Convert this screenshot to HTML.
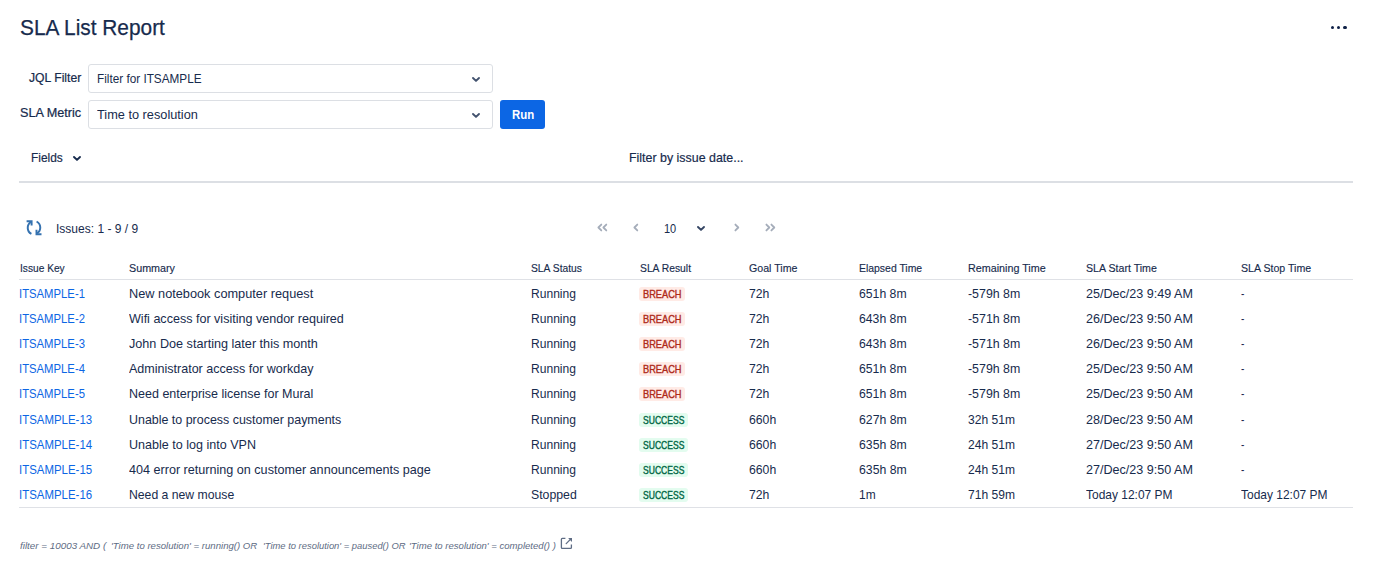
<!DOCTYPE html>
<html><head><meta charset="utf-8"><title>SLA List Report</title>
<style>
html,body{margin:0;padding:0;background:#fff;width:1374px;height:574px;overflow:hidden;position:relative}
body{font-family:"Liberation Sans",sans-serif;}
.t{position:absolute;white-space:pre;}
.ic{position:absolute;display:block}
.dot{position:absolute;width:3.6px;height:3.6px;border-radius:50%;background:#0F2147}
.sel{position:absolute;left:88px;width:403px;height:27px;border:1px solid #DCDFE4;border-radius:3px;background:#fff}
.run{position:absolute;left:500px;top:100px;width:45px;height:29px;background:#0C66E4;border-radius:3px}
.ln{position:absolute;left:19px;width:1334px}
.loz{position:absolute;height:14px;border-radius:3px}
</style></head><body>
<div class="t" style="left:20.00px;top:13px;font-size:22.4px;line-height:30px;color:#172B4D;transform:scaleX(0.9314);transform-origin:0.00px 0;-webkit-text-stroke:0.25px #172B4D;">SLA List Report</div>
<div class="dot" style="left:1330.60px;top:25.8px"></div>
<div class="dot" style="left:1336.90px;top:25.8px"></div>
<div class="dot" style="left:1343.20px;top:25.8px"></div>
<div class="t" style="left:28.60px;top:70px;font-size:12.0px;line-height:16px;color:#172B4D;transform:scaleX(1.0128);transform-origin:0.00px 0;-webkit-text-stroke:0.22px #172B4D;">JQL Filter</div>
<div class="t" style="left:19.70px;top:105px;font-size:12.0px;line-height:16px;color:#172B4D;transform:scaleX(1.0531);transform-origin:0.00px 0;-webkit-text-stroke:0.22px #172B4D;">SLA Metric</div>
<div class="sel" style="top:64px"></div>
<div class="sel" style="top:100px"></div>
<div class="t" style="left:97.00px;top:70px;font-size:13.1px;line-height:18px;color:#172B4D;transform:scaleX(0.8982);transform-origin:0.00px 0;">Filter for ITSAMPLE</div>
<div class="t" style="left:96.80px;top:106px;font-size:13.1px;line-height:18px;color:#172B4D;transform:scaleX(0.9737);transform-origin:0.00px 0;">Time to resolution</div>
<svg class="ic" style="left:471px;top:76px" width="10" height="7" viewBox="0 0 10 7"><path d="M2 2 L5 4.9 L8 2" fill="none" stroke="#42526E" stroke-width="1.9" stroke-linecap="round" stroke-linejoin="round"/></svg>
<svg class="ic" style="left:471px;top:112px" width="10" height="7" viewBox="0 0 10 7"><path d="M2 2 L5 4.9 L8 2" fill="none" stroke="#42526E" stroke-width="1.9" stroke-linecap="round" stroke-linejoin="round"/></svg>
<div class="run"></div>
<div class="t" style="left:512.00px;top:106px;font-size:13.1px;line-height:18px;color:#FFFFFF;font-weight:700;transform:scaleX(0.8713);transform-origin:0.00px 0;">Run</div>
<div class="t" style="left:30.60px;top:149px;font-size:13.4px;line-height:18px;color:#172B4D;transform:scaleX(0.8888);transform-origin:0.00px 0;-webkit-text-stroke:0.2px #172B4D;">Fields</div>
<svg class="ic" style="left:72.2px;top:155px" width="10" height="7" viewBox="0 0 10 7"><path d="M2 2 L5 4.9 L8 2" fill="none" stroke="#172B4D" stroke-width="1.9" stroke-linecap="round" stroke-linejoin="round"/></svg>
<div class="t" style="left:628.70px;top:149px;font-size:13.4px;line-height:18px;color:#172B4D;transform:scaleX(0.9271);transform-origin:0.00px 0;-webkit-text-stroke:0.2px #172B4D;">Filter by issue date...</div>
<div class="ln" style="top:181px;height:2px;background:#DCDFE4"></div>
<svg class="ic" style="left:22px;top:216px" width="24" height="22" viewBox="0 0 24 22">
<g fill="none" stroke="#3572B0" stroke-width="1.95" stroke-linecap="butt" stroke-linejoin="miter">
<path d="M9.4 17.9 A6.9 6.9 0 0 1 8.9 6"/>
<path d="M4.6 5.2 H9.6 V9.6"/>
<path d="M14.6 5.5 A6.9 6.9 0 0 1 15.1 17.4"/>
<path d="M19.5 18.2 H14.5 V13.8"/>
</g></svg>
<div class="t" style="left:55.80px;top:221px;font-size:12.6px;line-height:17px;color:#172B4D;transform:scaleX(0.9545);transform-origin:0.00px 0;">Issues: 1 - 9 / 9</div>
<svg class="ic" style="left:596.8px;top:223.4px" width="7" height="9" viewBox="0 0 7 9"><path d="M4.3 1.55 L1.4 4.5 L4.3 7.45" fill="none" stroke="#A5ADBA" stroke-width="1.8" stroke-linecap="round" stroke-linejoin="round"/></svg>
<svg class="ic" style="left:601.6px;top:223.4px" width="7" height="9" viewBox="0 0 7 9"><path d="M4.3 1.55 L1.4 4.5 L4.3 7.45" fill="none" stroke="#A5ADBA" stroke-width="1.8" stroke-linecap="round" stroke-linejoin="round"/></svg>
<svg class="ic" style="left:632.5px;top:223.4px" width="7" height="9" viewBox="0 0 7 9"><path d="M4.3 1.55 L1.4 4.5 L4.3 7.45" fill="none" stroke="#A5ADBA" stroke-width="1.8" stroke-linecap="round" stroke-linejoin="round"/></svg>
<div class="t" style="left:664.00px;top:220px;font-size:13.1px;line-height:18px;color:#172B4D;transform:scaleX(0.8390);transform-origin:0.00px 0;">10</div>
<svg class="ic" style="left:696px;top:225px" width="10" height="7" viewBox="0 0 10 7"><path d="M2 2 L5 4.9 L8 2" fill="none" stroke="#344563" stroke-width="1.9" stroke-linecap="round" stroke-linejoin="round"/></svg>
<svg class="ic" style="left:734.4px;top:223.4px" width="7" height="9" viewBox="0 0 7 9"><path d="M1.4 1.55 L4.3 4.5 L1.4 7.45" fill="none" stroke="#A5ADBA" stroke-width="1.8" stroke-linecap="round" stroke-linejoin="round"/></svg>
<svg class="ic" style="left:764.5px;top:223.4px" width="7" height="9" viewBox="0 0 7 9"><path d="M1.4 1.55 L4.3 4.5 L1.4 7.45" fill="none" stroke="#A5ADBA" stroke-width="1.8" stroke-linecap="round" stroke-linejoin="round"/></svg>
<svg class="ic" style="left:769.5px;top:223.4px" width="7" height="9" viewBox="0 0 7 9"><path d="M1.4 1.55 L4.3 4.5 L1.4 7.45" fill="none" stroke="#A5ADBA" stroke-width="1.8" stroke-linecap="round" stroke-linejoin="round"/></svg>
<div class="t" style="left:19.50px;top:260px;font-size:11.8px;line-height:16px;color:#172B4D;transform:scaleX(0.8629);transform-origin:0.00px 0;-webkit-text-stroke:0.15px #172B4D;">Issue Key</div>
<div class="t" style="left:129.20px;top:260px;font-size:11.8px;line-height:16px;color:#172B4D;transform:scaleX(0.9108);transform-origin:0.00px 0;-webkit-text-stroke:0.15px #172B4D;">Summary</div>
<div class="t" style="left:530.50px;top:260px;font-size:11.8px;line-height:16px;color:#172B4D;transform:scaleX(0.8731);transform-origin:0.00px 0;-webkit-text-stroke:0.15px #172B4D;">SLA Status</div>
<div class="t" style="left:639.50px;top:260px;font-size:11.8px;line-height:16px;color:#172B4D;transform:scaleX(0.8740);transform-origin:0.00px 0;-webkit-text-stroke:0.15px #172B4D;">SLA Result</div>
<div class="t" style="left:748.60px;top:260px;font-size:11.8px;line-height:16px;color:#172B4D;transform:scaleX(0.9005);transform-origin:0.00px 0;-webkit-text-stroke:0.15px #172B4D;">Goal Time</div>
<div class="t" style="left:858.70px;top:260px;font-size:11.8px;line-height:16px;color:#172B4D;transform:scaleX(0.8838);transform-origin:0.00px 0;-webkit-text-stroke:0.15px #172B4D;">Elapsed Time</div>
<div class="t" style="left:967.90px;top:260px;font-size:11.8px;line-height:16px;color:#172B4D;transform:scaleX(0.9114);transform-origin:0.00px 0;-webkit-text-stroke:0.15px #172B4D;">Remaining Time</div>
<div class="t" style="left:1086.40px;top:260px;font-size:11.8px;line-height:16px;color:#172B4D;transform:scaleX(0.9008);transform-origin:0.00px 0;-webkit-text-stroke:0.15px #172B4D;">SLA Start Time</div>
<div class="t" style="left:1240.50px;top:260px;font-size:11.8px;line-height:16px;color:#172B4D;transform:scaleX(0.8993);transform-origin:0.00px 0;-webkit-text-stroke:0.15px #172B4D;">SLA Stop Time</div>
<div class="ln" style="top:279px;height:1px;background:#DFE1E6"></div>
<div class="ln" style="top:507px;height:1px;background:#DFE1E6"></div>
<div class="t" style="left:19.40px;top:285px;font-size:13.4px;line-height:18px;color:#0C66E4;transform:scaleX(0.8441);transform-origin:0.00px 0;">ITSAMPLE-1</div>
<div class="t" style="left:129.10px;top:285px;font-size:13.4px;line-height:18px;color:#172B4D;transform:scaleX(0.9520);transform-origin:0.00px 0;">New notebook computer request</div>
<div class="t" style="left:530.80px;top:285px;font-size:13.4px;line-height:18px;color:#172B4D;transform:scaleX(0.9015);transform-origin:0.00px 0;">Running</div>
<div class="loz" style="left:639px;top:287px;width:46px;background:#FFEBE6"></div>
<div class="t" style="left:643.00px;top:288px;font-size:10.1px;line-height:14px;color:#AE2A19;transform:scaleX(0.9165);transform-origin:0.00px 0;-webkit-text-stroke:0.36px #AE2A19;">BREACH</div>
<div class="t" style="left:748.60px;top:285px;font-size:13.4px;line-height:18px;color:#172B4D;transform:scaleX(0.9116);transform-origin:0.00px 0;">72h</div>
<div class="t" style="left:858.50px;top:285px;font-size:13.4px;line-height:18px;color:#172B4D;transform:scaleX(0.9132);transform-origin:0.00px 0;">651h 8m</div>
<div class="t" style="left:968.00px;top:285px;font-size:13.4px;line-height:18px;color:#172B4D;transform:scaleX(0.9238);transform-origin:0.00px 0;">-579h 8m</div>
<div class="t" style="left:1086.00px;top:285px;font-size:13.4px;line-height:18px;color:#172B4D;transform:scaleX(0.9389);transform-origin:0.00px 0;">25/Dec/23 9:49 AM</div>
<div class="t" style="left:1241.30px;top:285px;font-size:13.4px;line-height:18px;color:#172B4D;transform:scaleX(0.7574);transform-origin:0.00px 0;">-</div>
<div class="t" style="left:19.40px;top:310px;font-size:13.4px;line-height:18px;color:#0C66E4;transform:scaleX(0.8441);transform-origin:0.00px 0;">ITSAMPLE-2</div>
<div class="t" style="left:129.10px;top:310px;font-size:13.4px;line-height:18px;color:#172B4D;transform:scaleX(0.9372);transform-origin:0.00px 0;">Wifi access for visiting vendor required</div>
<div class="t" style="left:530.80px;top:310px;font-size:13.4px;line-height:18px;color:#172B4D;transform:scaleX(0.9015);transform-origin:0.00px 0;">Running</div>
<div class="loz" style="left:639px;top:312px;width:46px;background:#FFEBE6"></div>
<div class="t" style="left:643.00px;top:313px;font-size:10.1px;line-height:14px;color:#AE2A19;transform:scaleX(0.9165);transform-origin:0.00px 0;-webkit-text-stroke:0.36px #AE2A19;">BREACH</div>
<div class="t" style="left:748.60px;top:310px;font-size:13.4px;line-height:18px;color:#172B4D;transform:scaleX(0.9116);transform-origin:0.00px 0;">72h</div>
<div class="t" style="left:858.50px;top:310px;font-size:13.4px;line-height:18px;color:#172B4D;transform:scaleX(0.9132);transform-origin:0.00px 0;">643h 8m</div>
<div class="t" style="left:968.00px;top:310px;font-size:13.4px;line-height:18px;color:#172B4D;transform:scaleX(0.9238);transform-origin:0.00px 0;">-571h 8m</div>
<div class="t" style="left:1086.00px;top:310px;font-size:13.4px;line-height:18px;color:#172B4D;transform:scaleX(0.9389);transform-origin:0.00px 0;">26/Dec/23 9:50 AM</div>
<div class="t" style="left:1241.30px;top:310px;font-size:13.4px;line-height:18px;color:#172B4D;transform:scaleX(0.7574);transform-origin:0.00px 0;">-</div>
<div class="t" style="left:19.40px;top:335px;font-size:13.4px;line-height:18px;color:#0C66E4;transform:scaleX(0.8441);transform-origin:0.00px 0;">ITSAMPLE-3</div>
<div class="t" style="left:129.10px;top:335px;font-size:13.4px;line-height:18px;color:#172B4D;transform:scaleX(0.9434);transform-origin:0.00px 0;">John Doe starting later this month</div>
<div class="t" style="left:530.80px;top:335px;font-size:13.4px;line-height:18px;color:#172B4D;transform:scaleX(0.9015);transform-origin:0.00px 0;">Running</div>
<div class="loz" style="left:639px;top:337px;width:46px;background:#FFEBE6"></div>
<div class="t" style="left:643.00px;top:338px;font-size:10.1px;line-height:14px;color:#AE2A19;transform:scaleX(0.9165);transform-origin:0.00px 0;-webkit-text-stroke:0.36px #AE2A19;">BREACH</div>
<div class="t" style="left:748.60px;top:335px;font-size:13.4px;line-height:18px;color:#172B4D;transform:scaleX(0.9116);transform-origin:0.00px 0;">72h</div>
<div class="t" style="left:858.50px;top:335px;font-size:13.4px;line-height:18px;color:#172B4D;transform:scaleX(0.9132);transform-origin:0.00px 0;">643h 8m</div>
<div class="t" style="left:968.00px;top:335px;font-size:13.4px;line-height:18px;color:#172B4D;transform:scaleX(0.9238);transform-origin:0.00px 0;">-571h 8m</div>
<div class="t" style="left:1086.00px;top:335px;font-size:13.4px;line-height:18px;color:#172B4D;transform:scaleX(0.9389);transform-origin:0.00px 0;">26/Dec/23 9:50 AM</div>
<div class="t" style="left:1241.30px;top:335px;font-size:13.4px;line-height:18px;color:#172B4D;transform:scaleX(0.7574);transform-origin:0.00px 0;">-</div>
<div class="t" style="left:19.40px;top:360px;font-size:13.4px;line-height:18px;color:#0C66E4;transform:scaleX(0.8441);transform-origin:0.00px 0;">ITSAMPLE-4</div>
<div class="t" style="left:129.10px;top:360px;font-size:13.4px;line-height:18px;color:#172B4D;transform:scaleX(0.9351);transform-origin:0.00px 0;">Administrator access for workday</div>
<div class="t" style="left:530.80px;top:360px;font-size:13.4px;line-height:18px;color:#172B4D;transform:scaleX(0.9015);transform-origin:0.00px 0;">Running</div>
<div class="loz" style="left:639px;top:362px;width:46px;background:#FFEBE6"></div>
<div class="t" style="left:643.00px;top:363px;font-size:10.1px;line-height:14px;color:#AE2A19;transform:scaleX(0.9165);transform-origin:0.00px 0;-webkit-text-stroke:0.36px #AE2A19;">BREACH</div>
<div class="t" style="left:748.60px;top:360px;font-size:13.4px;line-height:18px;color:#172B4D;transform:scaleX(0.9116);transform-origin:0.00px 0;">72h</div>
<div class="t" style="left:858.50px;top:360px;font-size:13.4px;line-height:18px;color:#172B4D;transform:scaleX(0.9132);transform-origin:0.00px 0;">651h 8m</div>
<div class="t" style="left:968.00px;top:360px;font-size:13.4px;line-height:18px;color:#172B4D;transform:scaleX(0.9238);transform-origin:0.00px 0;">-579h 8m</div>
<div class="t" style="left:1086.00px;top:360px;font-size:13.4px;line-height:18px;color:#172B4D;transform:scaleX(0.9389);transform-origin:0.00px 0;">25/Dec/23 9:50 AM</div>
<div class="t" style="left:1241.30px;top:360px;font-size:13.4px;line-height:18px;color:#172B4D;transform:scaleX(0.7574);transform-origin:0.00px 0;">-</div>
<div class="t" style="left:19.40px;top:385px;font-size:13.4px;line-height:18px;color:#0C66E4;transform:scaleX(0.8441);transform-origin:0.00px 0;">ITSAMPLE-5</div>
<div class="t" style="left:129.10px;top:385px;font-size:13.4px;line-height:18px;color:#172B4D;transform:scaleX(0.9347);transform-origin:0.00px 0;">Need enterprise license for Mural</div>
<div class="t" style="left:530.80px;top:385px;font-size:13.4px;line-height:18px;color:#172B4D;transform:scaleX(0.9015);transform-origin:0.00px 0;">Running</div>
<div class="loz" style="left:639px;top:387px;width:46px;background:#FFEBE6"></div>
<div class="t" style="left:643.00px;top:388px;font-size:10.1px;line-height:14px;color:#AE2A19;transform:scaleX(0.9165);transform-origin:0.00px 0;-webkit-text-stroke:0.36px #AE2A19;">BREACH</div>
<div class="t" style="left:748.60px;top:385px;font-size:13.4px;line-height:18px;color:#172B4D;transform:scaleX(0.9116);transform-origin:0.00px 0;">72h</div>
<div class="t" style="left:858.50px;top:385px;font-size:13.4px;line-height:18px;color:#172B4D;transform:scaleX(0.9132);transform-origin:0.00px 0;">651h 8m</div>
<div class="t" style="left:968.00px;top:385px;font-size:13.4px;line-height:18px;color:#172B4D;transform:scaleX(0.9238);transform-origin:0.00px 0;">-579h 8m</div>
<div class="t" style="left:1086.00px;top:385px;font-size:13.4px;line-height:18px;color:#172B4D;transform:scaleX(0.9389);transform-origin:0.00px 0;">25/Dec/23 9:50 AM</div>
<div class="t" style="left:1241.30px;top:385px;font-size:13.4px;line-height:18px;color:#172B4D;transform:scaleX(0.7574);transform-origin:0.00px 0;">-</div>
<div class="t" style="left:19.40px;top:411px;font-size:13.4px;line-height:18px;color:#0C66E4;transform:scaleX(0.8549);transform-origin:0.00px 0;">ITSAMPLE-13</div>
<div class="t" style="left:129.10px;top:411px;font-size:13.4px;line-height:18px;color:#172B4D;transform:scaleX(0.9288);transform-origin:0.00px 0;">Unable to process customer payments</div>
<div class="t" style="left:530.80px;top:411px;font-size:13.4px;line-height:18px;color:#172B4D;transform:scaleX(0.9015);transform-origin:0.00px 0;">Running</div>
<div class="loz" style="left:639px;top:413px;width:49px;background:#E3FCEF"></div>
<div class="t" style="left:643.00px;top:414px;font-size:10.1px;line-height:14px;color:#006644;transform:scaleX(0.8478);transform-origin:0.00px 0;-webkit-text-stroke:0.36px #006644;">SUCCESS</div>
<div class="t" style="left:748.60px;top:411px;font-size:13.4px;line-height:18px;color:#172B4D;transform:scaleX(0.9123);transform-origin:0.00px 0;">660h</div>
<div class="t" style="left:858.50px;top:411px;font-size:13.4px;line-height:18px;color:#172B4D;transform:scaleX(0.9151);transform-origin:0.00px 0;">627h 8m</div>
<div class="t" style="left:968.00px;top:411px;font-size:13.4px;line-height:18px;color:#172B4D;transform:scaleX(0.9017);transform-origin:0.00px 0;">32h 51m</div>
<div class="t" style="left:1086.00px;top:411px;font-size:13.4px;line-height:18px;color:#172B4D;transform:scaleX(0.9389);transform-origin:0.00px 0;">28/Dec/23 9:50 AM</div>
<div class="t" style="left:1241.30px;top:411px;font-size:13.4px;line-height:18px;color:#172B4D;transform:scaleX(0.7574);transform-origin:0.00px 0;">-</div>
<div class="t" style="left:19.40px;top:436px;font-size:13.4px;line-height:18px;color:#0C66E4;transform:scaleX(0.8549);transform-origin:0.00px 0;">ITSAMPLE-14</div>
<div class="t" style="left:129.10px;top:436px;font-size:13.4px;line-height:18px;color:#172B4D;transform:scaleX(0.9370);transform-origin:0.00px 0;">Unable to log into VPN</div>
<div class="t" style="left:530.80px;top:436px;font-size:13.4px;line-height:18px;color:#172B4D;transform:scaleX(0.9015);transform-origin:0.00px 0;">Running</div>
<div class="loz" style="left:639px;top:438px;width:49px;background:#E3FCEF"></div>
<div class="t" style="left:643.00px;top:439px;font-size:10.1px;line-height:14px;color:#006644;transform:scaleX(0.8478);transform-origin:0.00px 0;-webkit-text-stroke:0.36px #006644;">SUCCESS</div>
<div class="t" style="left:748.60px;top:436px;font-size:13.4px;line-height:18px;color:#172B4D;transform:scaleX(0.9123);transform-origin:0.00px 0;">660h</div>
<div class="t" style="left:858.50px;top:436px;font-size:13.4px;line-height:18px;color:#172B4D;transform:scaleX(0.9151);transform-origin:0.00px 0;">635h 8m</div>
<div class="t" style="left:968.00px;top:436px;font-size:13.4px;line-height:18px;color:#172B4D;transform:scaleX(0.9017);transform-origin:0.00px 0;">24h 51m</div>
<div class="t" style="left:1086.00px;top:436px;font-size:13.4px;line-height:18px;color:#172B4D;transform:scaleX(0.9389);transform-origin:0.00px 0;">27/Dec/23 9:50 AM</div>
<div class="t" style="left:1241.30px;top:436px;font-size:13.4px;line-height:18px;color:#172B4D;transform:scaleX(0.7574);transform-origin:0.00px 0;">-</div>
<div class="t" style="left:19.40px;top:461px;font-size:13.4px;line-height:18px;color:#0C66E4;transform:scaleX(0.8549);transform-origin:0.00px 0;">ITSAMPLE-15</div>
<div class="t" style="left:129.10px;top:461px;font-size:13.4px;line-height:18px;color:#172B4D;transform:scaleX(0.9406);transform-origin:0.00px 0;">404 error returning on customer announcements page</div>
<div class="t" style="left:530.80px;top:461px;font-size:13.4px;line-height:18px;color:#172B4D;transform:scaleX(0.9015);transform-origin:0.00px 0;">Running</div>
<div class="loz" style="left:639px;top:463px;width:49px;background:#E3FCEF"></div>
<div class="t" style="left:643.00px;top:464px;font-size:10.1px;line-height:14px;color:#006644;transform:scaleX(0.8478);transform-origin:0.00px 0;-webkit-text-stroke:0.36px #006644;">SUCCESS</div>
<div class="t" style="left:748.60px;top:461px;font-size:13.4px;line-height:18px;color:#172B4D;transform:scaleX(0.9123);transform-origin:0.00px 0;">660h</div>
<div class="t" style="left:858.50px;top:461px;font-size:13.4px;line-height:18px;color:#172B4D;transform:scaleX(0.9151);transform-origin:0.00px 0;">635h 8m</div>
<div class="t" style="left:968.00px;top:461px;font-size:13.4px;line-height:18px;color:#172B4D;transform:scaleX(0.9017);transform-origin:0.00px 0;">24h 51m</div>
<div class="t" style="left:1086.00px;top:461px;font-size:13.4px;line-height:18px;color:#172B4D;transform:scaleX(0.9389);transform-origin:0.00px 0;">27/Dec/23 9:50 AM</div>
<div class="t" style="left:1241.30px;top:461px;font-size:13.4px;line-height:18px;color:#172B4D;transform:scaleX(0.7574);transform-origin:0.00px 0;">-</div>
<div class="t" style="left:19.40px;top:486px;font-size:13.4px;line-height:18px;color:#0C66E4;transform:scaleX(0.8549);transform-origin:0.00px 0;">ITSAMPLE-16</div>
<div class="t" style="left:129.10px;top:486px;font-size:13.4px;line-height:18px;color:#172B4D;transform:scaleX(0.9122);transform-origin:0.00px 0;">Need a new mouse</div>
<div class="t" style="left:530.80px;top:486px;font-size:13.4px;line-height:18px;color:#172B4D;transform:scaleX(0.9176);transform-origin:0.00px 0;">Stopped</div>
<div class="loz" style="left:639px;top:488px;width:49px;background:#E3FCEF"></div>
<div class="t" style="left:643.00px;top:489px;font-size:10.1px;line-height:14px;color:#006644;transform:scaleX(0.8478);transform-origin:0.00px 0;-webkit-text-stroke:0.36px #006644;">SUCCESS</div>
<div class="t" style="left:748.60px;top:486px;font-size:13.4px;line-height:18px;color:#172B4D;transform:scaleX(0.9116);transform-origin:0.00px 0;">72h</div>
<div class="t" style="left:858.50px;top:486px;font-size:13.4px;line-height:18px;color:#172B4D;transform:scaleX(0.8912);transform-origin:0.00px 0;">1m</div>
<div class="t" style="left:968.00px;top:486px;font-size:13.4px;line-height:18px;color:#172B4D;transform:scaleX(0.9017);transform-origin:0.00px 0;">71h 59m</div>
<div class="t" style="left:1086.00px;top:486px;font-size:13.4px;line-height:18px;color:#172B4D;transform:scaleX(0.8935);transform-origin:0.00px 0;">Today 12:07 PM</div>
<div class="t" style="left:1240.80px;top:486px;font-size:13.4px;line-height:18px;color:#172B4D;transform:scaleX(0.8935);transform-origin:0.00px 0;">Today 12:07 PM</div>
<div class="t" style="left:19.60px;top:539px;font-size:9.8px;line-height:13px;color:#5E6C84;font-style:italic;transform:scaleX(1.0031);transform-origin:0.00px 0;">filter = 10003 AND (</div>
<div class="t" style="left:111.30px;top:539px;font-size:9.8px;line-height:13px;color:#5E6C84;font-style:italic;transform:scaleX(0.9796);transform-origin:0.00px 0;">'Time to resolution' = running() OR</div>
<div class="t" style="left:262.50px;top:539px;font-size:9.8px;line-height:13px;color:#5E6C84;font-style:italic;transform:scaleX(0.9582);transform-origin:0.00px 0;">'Time to resolution' = paused() OR</div>
<div class="t" style="left:409.30px;top:539px;font-size:9.8px;line-height:13px;color:#5E6C84;font-style:italic;transform:scaleX(0.9765);transform-origin:0.00px 0;">'Time to resolution' = completed() )</div>
<svg class="ic" style="left:560px;top:537px" width="13" height="13" viewBox="0 0 13 13">
<path d="M5.4 1.4 H2.3 Q1.4 1.4 1.4 2.3 V10.5 Q1.4 11.4 2.3 11.4 H10.5 Q11.4 11.4 11.4 10.5 V7.4" fill="none" stroke="#5E6C84" stroke-width="1.3" stroke-linecap="butt"/>
<path d="M6.2 6.6 L10.4 2.4" fill="none" stroke="#5E6C84" stroke-width="1.3" stroke-linecap="round"/>
<path d="M8.1 1 H12 V4.9 Z" fill="#5E6C84"/>
</svg>
</body></html>
